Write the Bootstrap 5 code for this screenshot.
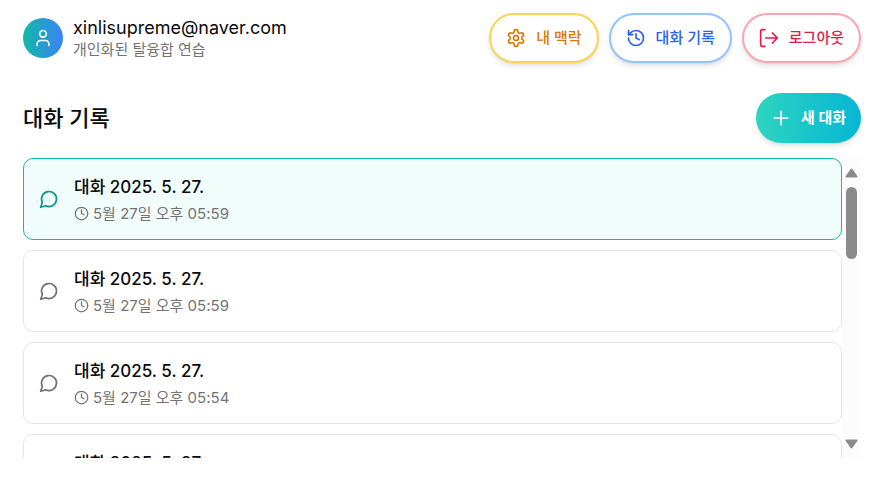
<!DOCTYPE html>
<html lang="ko">
<head>
<meta charset="utf-8">
<meta name="viewport" content="width=device-width, initial-scale=1">
<title>대화 기록</title>
<link href="https://cdn.jsdelivr.net/npm/bootstrap@5.3.0/dist/css/bootstrap.min.css" rel="stylesheet">
<style>
body{font-family:Inter,"Noto Sans CJK KR",sans-serif;color:#0a0a0a;background:#fff}
svg{fill:none;stroke:currentColor;stroke-width:2;stroke-linecap:round;stroke-linejoin:round;flex-shrink:0}
.page{padding:13px 14px 19px 23px}
.user,.actions{gap:10px}
.avatar{width:40px;height:40px;background:linear-gradient(90deg,#14b8a6,#3b82f6);color:#fff}
.user-mail{font-size:18px;line-height:24px;font-weight:400}
.user-note{font-size:15px;line-height:20px;color:#737373}
.pill{height:50px;padding:0 15px;border-width:2px;gap:10px;font-size:15px;font-weight:500;background:#fff;box-shadow:0 4px 6px -1px #0000001a,0 2px 4px -2px #0000001a}
.pill-amber{color:#d97706;border-color:#fcd34d}
.pill-blue{color:#2563eb;border-color:#93c5fd}
.pill-rose{color:#e11d48;border-color:#fda4af}
.pill-new,.pill-new:hover{color:#fff;border:0;font-weight:700;background:linear-gradient(90deg,#2dd4bf,#06b6d4)}
.title-row{margin:30px 0 15px}
.page-title{font-size:22px;line-height:32px;font-weight:500}
.history{height:300px}
.history-list{gap:10px}
.talk{height:82px;padding:0 15px;gap:15px;border:1px solid #e5e5e5;border-radius:10px;background:#fff;color:#737373;text-align:left;flex-shrink:0}
.talk.active{background:#f0fdfa;border-color:#14b8a6}
.talk.active .bubble{color:#0d9488}
.talk-name{font-size:17px;line-height:28px;font-weight:500;color:#0a0a0a}
.talk-time{font-size:15px;line-height:25px;gap:4px}
.rail{width:19px;background:#fcfcfc;padding:10px 0 9px}
.rail svg{fill:#8b8b8b;stroke:#8b8b8b}
.rail-thumb{width:11px;height:72px;border-radius:6px;background:#8b8b8b;margin-top:9px}
</style>
<script defer src="https://cdn.jsdelivr.net/npm/bootstrap@5.3.0/dist/js/bootstrap.bundle.min.js"></script>
</head>
<body>
<svg class="d-none" aria-hidden="true">
<symbol id="bubble" viewBox="0 0 24 24"><path d="M7.9 20A9 9 0 1 0 4 16.1L2 22Z"/></symbol>
<symbol id="clock" viewBox="0 0 24 24"><circle cx="12" cy="12" r="10"/><path d="M12 6v6l4 2"/></symbol>
</svg>
<div class="page">
<header class="d-flex align-items-center justify-content-between">
  <div class="user d-flex align-items-center">
    <div class="avatar rounded-circle d-flex align-items-center justify-content-center">
      <svg width="20" height="20" viewBox="0 0 24 24"><path d="M19 21v-2a4 4 0 0 0-4-4H9a4 4 0 0 0-4 4v2"/><circle cx="12" cy="7" r="4"/></svg>
    </div>
    <div><div class="user-mail">xinlisupreme@naver.com</div><div class="user-note">개인화된 탈융합 연습</div></div>
  </div>
  <nav class="actions d-flex">
    <button type="button" class="btn rounded-pill pill pill-amber d-flex align-items-center">
      <svg width="20" height="20" viewBox="0 0 24 24"><path d="M12.22 2h-.44a2 2 0 0 0-2 2v.18a2 2 0 0 1-1 1.73l-.43.25a2 2 0 0 1-2 0l-.15-.08a2 2 0 0 0-2.73.73l-.22.38a2 2 0 0 0 .73 2.73l.15.1a2 2 0 0 1 1 1.72v.51a2 2 0 0 1-1 1.74l-.15.09a2 2 0 0 0-.73 2.73l.22.38a2 2 0 0 0 2.73.73l.15-.08a2 2 0 0 1 2 0l.43.25a2 2 0 0 1 1 1.73V20a2 2 0 0 0 2 2h.44a2 2 0 0 0 2-2v-.18a2 2 0 0 1 1-1.73l.43-.25a2 2 0 0 1 2 0l.15.08a2 2 0 0 0 2.73-.73l.22-.39a2 2 0 0 0-.73-2.73l-.15-.08a2 2 0 0 1-1-1.74v-.5a2 2 0 0 1 1-1.74l.15-.09a2 2 0 0 0 .73-2.73l-.22-.38a2 2 0 0 0-2.73-.73l-.15.08a2 2 0 0 1-2 0l-.43-.25a2 2 0 0 1-1-1.73V4a2 2 0 0 0-2-2z"/><circle cx="12" cy="12" r="3"/></svg>
      <span>내 맥락</span></button>
    <button type="button" class="btn rounded-pill pill pill-blue d-flex align-items-center">
      <svg width="20" height="20" viewBox="0 0 24 24"><path d="M3 12a9 9 0 1 0 9-9 9.750 9.750 0 0 0-6.740 2.740L3 8"/><path d="M3 3v5h5M12 7v5l4 2"/></svg>
      <span>대화 기록</span></button>
    <button type="button" class="btn rounded-pill pill pill-rose d-flex align-items-center">
      <svg width="20" height="20" viewBox="0 0 24 24"><path d="M7 2H4a2 2 0 0 0-2 2v16a2 2 0 0 0 2 2h3M8 12h14M16 6l6 6-6 6"/></svg>
      <span>로그아웃</span></button>
  </nav>
</header>
<main>
  <div class="title-row d-flex align-items-center justify-content-between">
    <h1 class="page-title m-0">대화 기록</h1>
    <button type="button" class="btn rounded-pill pill pill-new d-flex align-items-center">
      <svg width="20" height="20" viewBox="0 0 24 24"><path d="M4 12h16M12 4v16"/></svg>
      <span>새 대화</span></button>
  </div>
  <div class="history d-flex">
    <div class="history-list flex-grow-1 d-flex flex-column overflow-hidden">
      <button type="button" class="talk active d-flex align-items-center"><svg class="bubble" width="20" height="20"><use href="#bubble"/></svg><span><span class="talk-name d-block">대화 2025. 5. 27.</span><span class="talk-time d-flex align-items-center"><svg width="15" height="15"><use href="#clock"/></svg>5월 27일 오후 05:59</span></span></button>
      <button type="button" class="talk d-flex align-items-center"><svg class="bubble" width="20" height="20"><use href="#bubble"/></svg><span><span class="talk-name d-block">대화 2025. 5. 27.</span><span class="talk-time d-flex align-items-center"><svg width="15" height="15"><use href="#clock"/></svg>5월 27일 오후 05:59</span></span></button>
      <button type="button" class="talk d-flex align-items-center"><svg class="bubble" width="20" height="20"><use href="#bubble"/></svg><span><span class="talk-name d-block">대화 2025. 5. 27.</span><span class="talk-time d-flex align-items-center"><svg width="15" height="15"><use href="#clock"/></svg>5월 27일 오후 05:54</span></span></button>
      <button type="button" class="talk d-flex align-items-center"><svg class="bubble" width="20" height="20"><use href="#bubble"/></svg><span><span class="talk-name d-block">대화 2025. 5. 27.</span><span class="talk-time d-flex align-items-center"><svg width="15" height="15"><use href="#clock"/></svg>5월 27일 오후 05:54</span></span></button>
    </div>
    <div class="rail d-flex flex-column align-items-center" aria-hidden="true">
      <svg width="13" height="10" viewBox="0 0 13 10"><path d="M6.500 1.500 1.500 8.500h10z"/></svg>
      <div class="rail-thumb"></div>
      <svg class="mt-auto" width="13" height="10" viewBox="0 0 13 10"><path d="M6.500 8.500 1.500 1.500h10z"/></svg>
    </div>
  </div>
</main>
</div>
</body>
</html>
